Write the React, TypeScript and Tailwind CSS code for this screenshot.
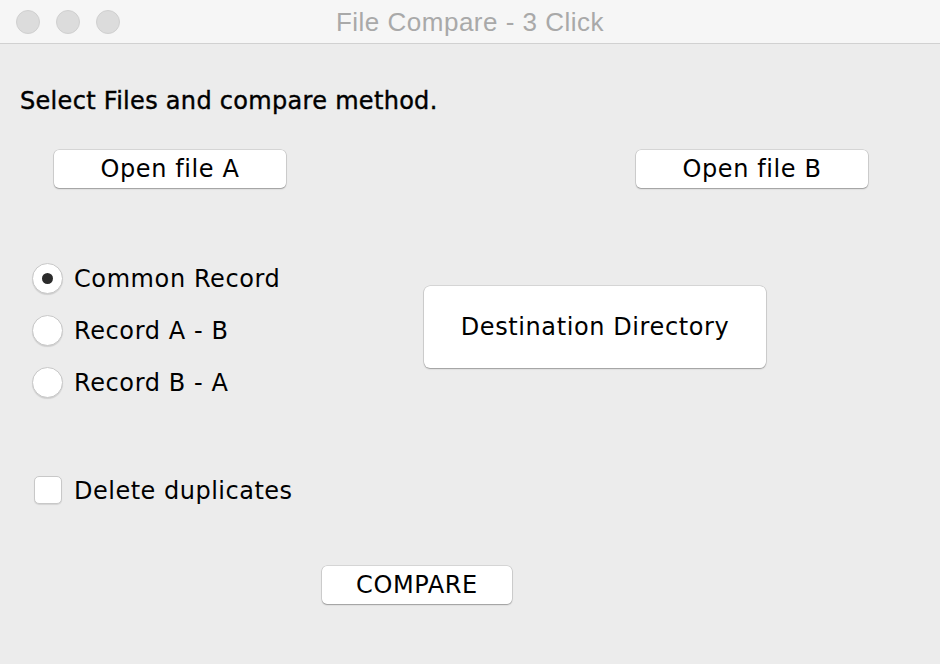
const font = { fontFamily: '"DejaVu Sans", "Noto Sans", sans-serif' };

function MacButton({ label, className }: { label: string; className: string }) {
  return (
    <button
      type="button"
      className={
        'bg-white rounded-[5px] text-black text-[24px] tracking-[0.6px] flex items-center justify-center shadow-[0_0_0_0.5px_rgba(0,0,0,0.18),0_1px_1.5px_rgba(0,0,0,0.28)] ' +
        className
      }
    >
      {label}
    </button>
  );
}

function Radio({ label, checked }: { label: string; checked?: boolean }) {
  return (
    <div className="h-[52px] flex items-center gap-[11px]">
      <span className="w-[31px] h-[31px] rounded-full bg-white border border-[#c8c8c8] shadow-[0_1px_1px_rgba(0,0,0,0.12)] flex items-center justify-center">
        {checked && <span className="w-[11px] h-[11px] rounded-full bg-[#2b2b2b]" />}
      </span>
      <span className="text-[24px] tracking-[0.6px] text-black pt-[2px]">{label}</span>
    </div>
  );
}

export default function App() {
  return (
    <div className="w-[940px] h-[664px] bg-[#ececec] flex flex-col overflow-hidden" style={font}>
      {/* Title bar */}
      <div className="h-[44px] bg-[#f6f6f6] border-b border-[#d1d1d1] grid grid-cols-[1fr_auto_1fr] items-center">
        <div className="flex gap-4 pl-4">
          <span className="w-6 h-6 rounded-full bg-[#dcdcdc] border border-[#d0d0d0]" />
          <span className="w-6 h-6 rounded-full bg-[#dcdcdc] border border-[#d0d0d0]" />
          <span className="w-6 h-6 rounded-full bg-[#dcdcdc] border border-[#d0d0d0]" />
        </div>
        <div
          className="text-[26px] tracking-[0.5px] text-[#a9a9a9] pt-[1px]"
          style={{ fontFamily: '"Liberation Sans", Arial, sans-serif' }}
        >
          File Compare - 3 Click
        </div>
        <div />
      </div>

      {/* Heading */}
      <div className="mt-[43px] pl-[20px] h-[28px] leading-[28px] text-[24px] tracking-[0.3px] text-black [-webkit-text-stroke:0.4px_#000]">
        Select Files and compare method.
      </div>

      {/* File buttons */}
      <div className="mt-[35px] flex pl-[54px]">
        <MacButton label="Open file A" className="w-[232px] h-[38px]" />
        <MacButton label="Open file B" className="w-[232px] h-[38px] ml-[350px]" />
      </div>

      {/* Method + destination */}
      <div className="mt-[64px] flex pl-[32px]">
        <div className="w-[392px] flex flex-col">
          <Radio label="Common Record" checked />
          <Radio label="Record A - B" />
          <Radio label="Record B - A" />
        </div>
        <div className="pt-[34px]">
          <MacButton label="Destination Directory" className="w-[342px] h-[82px] rounded-[6px]" />
        </div>
      </div>

      {/* Delete duplicates */}
      <div className="mt-[56px] h-[52px] flex items-center gap-[12px] pl-[34px]">
        <span className="w-[28px] h-[28px] rounded-[5px] bg-white border border-[#c8c8c8] shadow-[0_1px_1px_rgba(0,0,0,0.1)]" />
        <span className="text-[24px] tracking-[0.5px] text-black pt-[2px]">Delete duplicates</span>
      </div>

      {/* Compare */}
      <div className="mt-[50px] pl-[322px]">
        <MacButton label="COMPARE" className="w-[190px] h-[38px]" />
      </div>
    </div>
  );
}
